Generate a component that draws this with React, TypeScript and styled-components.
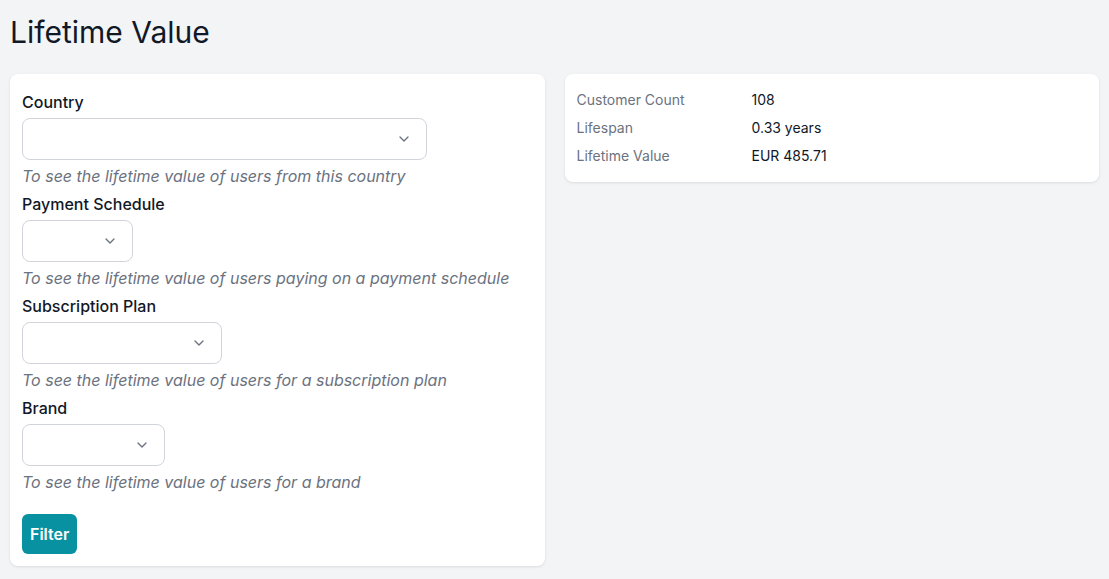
import React from 'react';
import styled, { createGlobalStyle } from 'styled-components';

const GlobalStyle = createGlobalStyle`
  body {
    margin: 0;
    background: #f3f4f6;
    font-family: Inter, "Noto Sans", sans-serif;
    color: #111827;
  }
`;

const Page = styled.div`
  padding: 12px 10px 10px;
`;

const Title = styled.h1`
  margin: 0 0 22px;
  font-size: 30px;
  font-weight: 400;
  line-height: 40px;
`;

const Columns = styled.div`
  display: flex;
  gap: 20px;
  align-items: flex-start;
`;

const Card = styled.div`
  flex: 1;
  background: #fff;
  border-radius: 8px;
  box-shadow: 0 1px 3px rgba(0, 0, 0, 0.1);
`;

const FormCard = styled(Card)`
  padding: 16px 12px 12px;
  display: flex;
  flex-direction: column;
`;

const Label = styled.label`
  font-size: 16px;
  font-weight: 500;
  line-height: 24px;
  margin-bottom: 4px;
`;

const Select = styled.div<{ $width: number }>`
  width: ${(p) => p.$width}px;
  height: 42px;
  box-sizing: border-box;
  border: 1px solid #d1d5db;
  border-radius: 8px;
  display: flex;
  align-items: center;
  justify-content: flex-end;
  padding-right: 14px;
  color: #6b7280;
`;

const Hint = styled.p`
  margin: 4px 0 4px;
  font-size: 16px;
  line-height: 24px;
  font-style: italic;
  color: #6b7280;
`;

const FilterButton = styled.button`
  align-self: flex-start;
  margin-top: 16px;
  height: 40px;
  padding: 0 8px;
  border: none;
  border-radius: 6px;
  background: #0891a0;
  color: #fff;
  font-family: inherit;
  font-size: 16px;
  font-weight: 600;
`;

const InfoCard = styled(Card)`
  padding: 12px;
`;

const InfoRow = styled.div`
  display: grid;
  grid-template-columns: 175px 1fr;
  font-size: 14px;
  line-height: 28px;
`;

const InfoLabel = styled.span`
  color: #6b7280;
`;

const Chevron = () => (
  <svg width="16" height="16" viewBox="0 0 24 24" fill="none" stroke="currentColor" strokeWidth="2" strokeLinecap="round" strokeLinejoin="round">
    <path d="M6 9l6 6 6-6" />
  </svg>
);

const fields = [
  { label: 'Country', width: 405, hint: 'To see the lifetime value of users from this country' },
  { label: 'Payment Schedule', width: 111, hint: 'To see the lifetime value of users paying on a payment schedule' },
  { label: 'Subscription Plan', width: 200, hint: 'To see the lifetime value of users for a subscription plan' },
  { label: 'Brand', width: 143, hint: 'To see the lifetime value of users for a brand' },
];

const stats = [
  ['Customer Count', '108'],
  ['Lifespan', '0.33 years'],
  ['Lifetime Value', 'EUR 485.71'],
];

const App: React.FC = () => (
  <Page>
    <GlobalStyle />
    <Title>Lifetime Value</Title>
    <Columns>
      <FormCard>
        {fields.map((f) => (
          <React.Fragment key={f.label}>
            <Label>{f.label}</Label>
            <Select $width={f.width}>
              <Chevron />
            </Select>
            <Hint>{f.hint}</Hint>
          </React.Fragment>
        ))}
        <FilterButton>Filter</FilterButton>
      </FormCard>
      <InfoCard>
        {stats.map(([k, v]) => (
          <InfoRow key={k}>
            <InfoLabel>{k}</InfoLabel>
            <span>{v}</span>
          </InfoRow>
        ))}
      </InfoCard>
    </Columns>
  </Page>
);

export default App;
